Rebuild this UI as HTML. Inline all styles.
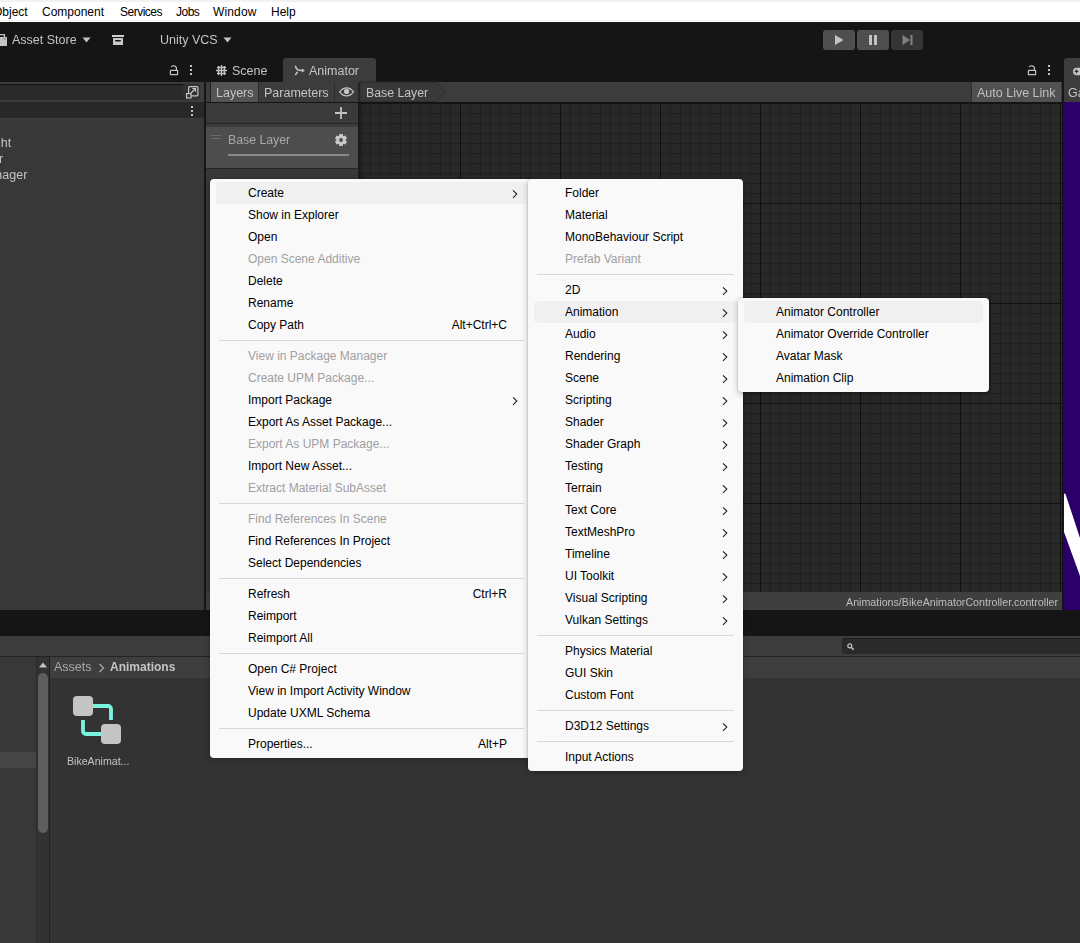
<!DOCTYPE html>
<html><head><meta charset="utf-8">
<style>
*{box-sizing:border-box;margin:0;padding:0}
html,body{width:1080px;height:943px;overflow:hidden;background:#151515}
body{position:relative;font-family:"Liberation Sans",sans-serif;}
.a{position:absolute}
.t{position:absolute;white-space:nowrap;color:#c4c4c4;font-size:12.5px;line-height:14px;will-change:transform}
.mb{position:absolute;top:5px;font-size:12px;line-height:14px;color:#000;white-space:nowrap}
.menu{position:absolute;background:#f9f9f9;border-radius:4px;box-shadow:0 0 0 1px rgba(0,0,0,0.07),0 2px 6px rgba(0,0,0,0.25)}
.mi{position:absolute;left:0;right:0;height:22px}
.mi span{position:absolute;top:4px;font-size:12px;line-height:14px;color:#000;white-space:nowrap}
.mi.d span{color:#a0a0a0}
.mi.h:before{content:"";position:absolute;left:6px;right:6px;top:0;bottom:0;background:#f0f0f0;border-radius:4px}
.sep{position:absolute;height:1px;background:#d8d8d8}
svg{position:absolute;overflow:visible}
</style></head><body>

<div class="a" style="left:0px;top:0px;width:1080px;height:2px;background:#f2f2f2;"></div>
<div class="a" style="left:0px;top:2px;width:1080px;height:20px;background:#ffffff;"></div>
<div class="a" style="left:0px;top:20px;width:1080px;height:1px;background:#f2f2f2;"></div>
<div class="mb" style="left:-7px;letter-spacing:0px">Object</div>
<div class="mb" style="left:42px;letter-spacing:0px">Component</div>
<div class="mb" style="left:120px;letter-spacing:-0.5px">Services</div>
<div class="mb" style="left:176px;letter-spacing:-0.5px">Jobs</div>
<div class="mb" style="left:213px;letter-spacing:0.15px">Window</div>
<div class="mb" style="left:271px;letter-spacing:0px">Help</div>
<div class="a" style="left:0px;top:22px;width:1080px;height:60px;background:#151515;"></div>
<svg style="left:0;top:33px" width="10" height="14"><path d="M-3 4h10v9h-10z" fill="#c4c4c4"/><path d="M-1 4V1.6h5.4V4" stroke="#c4c4c4" stroke-width="1.3" fill="none"/><path d="M3.3 5.3l1.2 1.1 1.2-1.1" stroke="#555" stroke-width="0.9" fill="none"/></svg>
<div class="t" style="left:12px;top:33px;font-size:12.5px;color:#c4c4c4;">Asset Store</div>
<svg style="left:82px;top:37px" width="10" height="6"><path d="M0.5 0.5h8l-4 5z" fill="#c4c4c4"/></svg>
<svg style="left:112px;top:34px" width="12" height="11"><rect x="0" y="1" width="12" height="2" fill="#d0d0d0"/><path d="M1 4h10v7h-10z" fill="#c8c8c8"/><path d="M3.2 6h5.6v0.4a1.2 1.2 0 0 1-1.2 1.2H4.4a1.2 1.2 0 0 1-1.2-1.2z" fill="#151515"/></svg>
<div class="t" style="left:160px;top:33px;font-size:12.5px;color:#c4c4c4;">Unity VCS</div>
<svg style="left:223px;top:37px" width="10" height="6"><path d="M0.5 0.5h8l-4 5z" fill="#c4c4c4"/></svg>
<div class="a" style="left:823px;top:30px;width:32px;height:20px;background:#4f4f4f;border-radius:3px"></div>
<div class="a" style="left:857px;top:30px;width:32px;height:20px;background:#4f4f4f;border-radius:3px"></div>
<div class="a" style="left:891px;top:30px;width:32px;height:20px;background:#353535;border-radius:3px"></div>
<svg style="left:834px;top:34px" width="10" height="12"><path d="M1 1v10l8.5-5z" fill="#c4c4c4"/></svg>
<div class="a" style="left:869px;top:35px;width:3px;height:10px;background:#c4c4c4;"></div>
<div class="a" style="left:874px;top:35px;width:3px;height:10px;background:#c4c4c4;"></div>
<svg style="left:902px;top:34px" width="12" height="12"><path d="M0.5 1v10l7.5-5z" fill="#808080"/><rect x="8.5" y="1" width="2" height="10" fill="#808080"/></svg>
<svg style="left:169px;top:65px" width="10" height="11"><path d="M2.2 1.9C3.6 0.3 6.9 0.3 7.4 2.6V5.2" stroke="#c4c4c4" stroke-width="1.2" fill="none"/><rect x="1.4" y="5.3" width="7.2" height="4.4" rx="0.5" stroke="#c4c4c4" stroke-width="1.2" fill="none"/></svg>
<div class="a" style="left:190px;top:65px;width:2px;height:2px;background:#c4c4c4;"></div>
<div class="a" style="left:190px;top:69px;width:2px;height:2px;background:#c4c4c4;"></div>
<div class="a" style="left:190px;top:73px;width:2px;height:2px;background:#c4c4c4;"></div>
<svg style="left:1027px;top:65px" width="10" height="11"><path d="M2.2 1.9C3.6 0.3 6.9 0.3 7.4 2.6V5.2" stroke="#c4c4c4" stroke-width="1.2" fill="none"/><rect x="1.4" y="5.3" width="7.2" height="4.4" rx="0.5" stroke="#c4c4c4" stroke-width="1.2" fill="none"/></svg>
<div class="a" style="left:1048px;top:65px;width:2px;height:2px;background:#c4c4c4;"></div>
<div class="a" style="left:1048px;top:69px;width:2px;height:2px;background:#c4c4c4;"></div>
<div class="a" style="left:1048px;top:73px;width:2px;height:2px;background:#c4c4c4;"></div>
<svg style="left:216px;top:65px" width="11" height="11"><path d="M2.6 1v9M5.5 0v11M8.4 1v9M1 2.5h9M0 5.5h11M1 8.5h9" stroke="#c4c4c4" stroke-width="1.3"/></svg>
<div class="t" style="left:232px;top:64px;font-size:12.5px;color:#c4c4c4;">Scene</div>
<div class="a" style="left:283px;top:58px;width:93px;height:24px;background:#3c3c3c;border-radius:3px 3px 0 0"></div>
<svg style="left:294px;top:65px" width="12" height="11"><path d="M1.6 1.4C2.2 4 3.6 5.4 6 5.4H8.5M3.4 7.3L1.6 9.4" stroke="#c4c4c4" stroke-width="1.6" fill="none" stroke-linecap="round"/><path d="M8 3.5L11 5.4 8 7.4z" fill="#c4c4c4"/></svg>
<div class="t" style="left:309px;top:64px;font-size:12.5px;color:#c4c4c4;">Animator</div>
<div class="a" style="left:1064px;top:58px;width:20px;height:24px;background:#3c3c3c;border-radius:3px 0 0 0"></div>
<svg style="left:1073px;top:67px" width="12" height="9"><rect x="0" y="0.8" width="14" height="7.4" rx="3.7" fill="#c4c4c4"/><path d="M3.5 2.6v3.6M1.7 4.4h3.6" stroke="#2a2a2a" stroke-width="1.2"/></svg>
<div class="a" style="left:0px;top:82px;width:204px;height:20px;background:#3c3c3c;"></div>
<div class="a" style="left:0px;top:84px;width:183px;height:16px;background:#2a2a2a;border-top:1px solid #111"></div>
<div class="a" style="left:183px;top:84px;width:17px;height:16px;background:#303030;border-radius:0 3px 3px 0"></div>
<svg style="left:186px;top:86px" width="13" height="13"><rect x="2.6" y="0.6" width="9.3" height="9.3" rx="1" stroke="#c4c4c4" stroke-width="1.2" fill="none"/><rect x="0.6" y="7.6" width="4.4" height="4.4" stroke="#c4c4c4" stroke-width="1.2" fill="#303030"/><path d="M5 7l4.5-4.5M6.3 2.5h3.2v3.2" stroke="#c4c4c4" stroke-width="1.2" fill="none"/></svg>
<div class="a" style="left:0px;top:102px;width:204px;height:16px;background:#282828;"></div>
<div class="a" style="left:191px;top:106px;width:2px;height:2px;background:#c4c4c4;"></div>
<div class="a" style="left:191px;top:110px;width:2px;height:2px;background:#c4c4c4;"></div>
<div class="a" style="left:191px;top:114px;width:2px;height:2px;background:#c4c4c4;"></div>
<div class="a" style="left:0px;top:118px;width:204px;height:492px;background:#383838;"></div>
<div class="a" style="left:0px;top:118px;width:204px;height:1px;background:#3f3f3f;"></div>
<div class="t" style="left:-16px;top:136px;font-size:12.5px;color:#c4c4c4;">Light</div>
<div class="t" style="left:-15px;top:152px;font-size:12.5px;color:#c4c4c4;">ner</div>
<div class="t" style="left:-22px;top:168px;font-size:12.5px;color:#c4c4c4;">Manager</div>
<div class="a" style="left:204px;top:82px;width:2px;height:528px;background:#151515;"></div>
<div class="a" style="left:206px;top:82px;width:856px;height:20px;background:#3c3c3c;"></div>
<div class="a" style="left:210px;top:82px;width:1px;height:20px;background:#232323;"></div>
<div class="a" style="left:211px;top:82px;width:47px;height:20px;background:#545454;"></div>
<div class="t" style="left:216px;top:86px;font-size:12.5px;color:#c4c4c4;">Layers</div>
<div class="a" style="left:258px;top:82px;width:1px;height:20px;background:#2a2a2a;"></div>
<div class="t" style="left:264px;top:86px;font-size:12.5px;color:#c4c4c4;">Parameters</div>
<div class="a" style="left:334px;top:82px;width:1px;height:20px;background:#2a2a2a;"></div>
<svg style="left:339px;top:87px" width="16" height="10"><path d="M0.8 4.8C3 1.6 5.5 0.8 7.6 0.8s4.6 0.8 6.8 4c-2.2 3.2-4.7 4-6.8 4S3 8 0.8 4.8z" stroke="#c4c4c4" stroke-width="1.3" fill="none"/><circle cx="7.6" cy="4.4" r="2.6" fill="#c4c4c4"/></svg>
<div class="a" style="left:358px;top:82px;width:2px;height:20px;background:#232323;"></div>
<svg style="left:360px;top:82px" width="90" height="20"><path d="M0 0h76l9 10-9 10H0z" fill="#393939" stroke="#2b2b2b" stroke-width="1"/></svg>
<div class="t" style="left:366px;top:86px;font-size:12.3px;color:#c4c4c4;">Base Layer</div>
<div class="a" style="left:971px;top:82px;width:1px;height:20px;background:#2e2e2e;"></div>
<div class="a" style="left:972px;top:82px;width:89px;height:20px;background:#515151;"></div>
<div class="t" style="left:977px;top:86px;font-size:12.5px;color:#c0c0c0;">Auto Live Link</div>
<div class="a" style="left:206px;top:102px;width:856px;height:1px;background:#151515;"></div>
<div class="a" style="left:206px;top:103px;width:152px;height:489px;background:#383838;"></div>
<div class="a" style="left:206px;top:103px;width:152px;height:20px;background:#3a3a3a;"></div>
<svg style="left:335px;top:107px" width="12" height="12"><path d="M6 0v12M0 6h12" stroke="#c4c4c4" stroke-width="1.8"/></svg>
<div class="a" style="left:206px;top:123px;width:152px;height:1px;background:#262626;"></div>
<div class="a" style="left:206px;top:124px;width:152px;height:3px;background:#3d3d3d;"></div>
<div class="a" style="left:206px;top:127px;width:152px;height:41px;background:#4d4d4d;"></div>
<div class="a" style="left:211px;top:135px;width:10px;height:1px;background:#6a6a6a;"></div>
<div class="a" style="left:211px;top:138px;width:10px;height:1px;background:#6a6a6a;"></div>
<div class="t" style="left:228px;top:133px;font-size:12.3px;color:#a8a8a8;">Base Layer</div>
<svg style="left:334px;top:133px" width="14" height="14"><g transform="translate(7 7)" fill="#c8c8c8"><circle r="4.7"/><g><rect x="-1.9" y="-6" width="3.8" height="3" rx="0.6"/><rect x="-1.9" y="3" width="3.8" height="3" rx="0.6"/></g><g transform="rotate(60)"><rect x="-1.9" y="-6" width="3.8" height="3" rx="0.6"/><rect x="-1.9" y="3" width="3.8" height="3" rx="0.6"/></g><g transform="rotate(120)"><rect x="-1.9" y="-6" width="3.8" height="3" rx="0.6"/><rect x="-1.9" y="3" width="3.8" height="3" rx="0.6"/></g></g><circle cx="7" cy="7" r="1.9" fill="#4d4d4d"/></svg>
<div class="a" style="left:228px;top:154px;width:121px;height:2px;background:#8a8a8a;"></div>
<div class="a" style="left:206px;top:168px;width:152px;height:1px;background:#262626;"></div>
<div class="a" style="left:361px;top:103px;width:701px;height:489px;background-color:#282828;
background-image:
linear-gradient(to right,#111 1px,transparent 1px),
linear-gradient(to bottom,#111 1px,transparent 1px),
linear-gradient(to right,#1f1f1f 1px,transparent 1px),
linear-gradient(to bottom,#1f1f1f 1px,transparent 1px);
background-size:100px 100px,100px 100px,10px 10px,10px 10px;
background-position:99px 0,0 0,9px 0,0 0"></div>
<div class="a" style="left:358px;top:103px;width:3px;height:489px;background:#222222;"></div>
<div class="a" style="left:358px;top:102px;width:704px;height:2px;background:#141414;"></div>
<div class="a" style="left:358px;top:103px;width:9px;height:489px;background:linear-gradient(to right,rgba(0,0,0,0.25),rgba(0,0,0,0.1) 50%,rgba(0,0,0,0))"></div>
<div class="a" style="left:206px;top:592px;width:856px;height:18px;background:#3f3f3f;"></div>
<div class="t" style="right:22px;top:595px;font-size:10.7px;color:#bdbdbd">Animations/BikeAnimatorController.controller</div>
<div class="a" style="left:1062px;top:58px;width:2px;height:552px;background:#151515;"></div>
<div class="a" style="left:1064px;top:82px;width:16px;height:20px;background:#3c3c3c;"></div>
<div class="t" style="left:1068px;top:86px;font-size:12.5px;color:#c4c4c4;">Game</div>
<div class="a" style="left:1064px;top:102px;width:16px;height:508px;background:#2a0068;"></div>
<svg style="left:1064px;top:490px" width="16" height="90"><path d="M0 4Q0 3 1.5 4L16 48V86L0 42z" fill="#ffffff"/></svg>
<div class="a" style="left:0px;top:610px;width:1080px;height:26px;background:#151515;"></div>
<div class="a" style="left:0px;top:636px;width:1080px;height:20px;background:#3c3c3c;"></div>
<div class="a" style="left:842px;top:638px;width:240px;height:16px;background:#2a2a2a;border-radius:3px;border-top:1px solid #202020"></div>
<svg style="left:847px;top:643px" width="8" height="8"><circle cx="2.8" cy="2.8" r="2" stroke="#c4c4c4" stroke-width="1.2" fill="none"/><path d="M4.2 4.2l2.5 2.5" stroke="#c4c4c4" stroke-width="1.6"/></svg>
<div class="a" style="left:0px;top:656px;width:1080px;height:1px;background:#232323;"></div>
<div class="a" style="left:0px;top:657px;width:36px;height:286px;background:#383838;"></div>
<div class="a" style="left:0px;top:752px;width:36px;height:16px;background:#464646;"></div>
<div class="a" style="left:36px;top:657px;width:13px;height:286px;background:#323232;"></div>
<div class="a" style="left:36px;top:657px;width:1px;height:286px;background:#2c2c2c;"></div>
<svg style="left:38px;top:662px" width="10" height="6"><path d="M1 5.5L5 0.5 9 5.5z" fill="#c4c4c4"/></svg>
<div class="a" style="left:38px;top:673px;width:10px;height:160px;background:#5e5e5e;border-radius:5px"></div>
<div class="a" style="left:49px;top:657px;width:1px;height:286px;background:#232323;"></div>
<div class="a" style="left:50px;top:657px;width:1030px;height:21px;background:#3e3e3e;"></div>
<div class="t" style="left:54px;top:660px;font-size:12.5px;color:#a8a8a8;">Assets</div>
<svg style="left:98px;top:663px" width="8" height="10"><path d="M1.5 1l4 4-4 4" stroke="#a8a8a8" stroke-width="1.3" fill="none"/></svg>
<div class="t" style="left:110px;top:660px;font-size:12px;color:#c4c4c4;font-weight:bold">Animations</div>
<div class="a" style="left:50px;top:678px;width:1030px;height:265px;background:#333333;"></div>
<svg style="left:72px;top:695px" width="52" height="52"><path d="M20 11h16a3 3 0 0 1 3 3V25M11 25v11a3 3 0 0 0 3 3h16" stroke="#7af4e0" stroke-width="3.8" fill="none"/><rect x="1" y="1" width="20" height="20" rx="4" fill="#c4c4c4"/><rect x="29" y="29" width="20" height="20" rx="4" fill="#c4c4c4"/></svg>
<div class="t" style="left:67px;top:754px;font-size:10.6px;color:#c4c4c4;">BikeAnimat...</div>
<div class="menu" style="left:210px;top:179px;width:323px;height:579px">
<div class="mi h" style="top:3px"><span style="left:38px">Create</span>
<svg style="left:301.5px;top:7px" width="7" height="10"><path d="M1 1.3l3.8 3.8L1 8.9" stroke="#1e1e1e" stroke-width="1.1" fill="none"/></svg>
</div>
<div class="mi" style="top:25px"><span style="left:38px">Show in Explorer</span>
</div>
<div class="mi" style="top:47px"><span style="left:38px">Open</span>
</div>
<div class="mi d" style="top:69px"><span style="left:38px">Open Scene Additive</span>
</div>
<div class="mi" style="top:91px"><span style="left:38px">Delete</span>
</div>
<div class="mi" style="top:113px"><span style="left:38px">Rename</span>
</div>
<div class="mi" style="top:135px"><span style="left:38px">Copy Path</span>
<span style="right:26px">Alt+Ctrl+C</span>
</div>
<div class="sep" style="left:9px;right:9px;top:161px"></div>
<div class="mi d" style="top:166px"><span style="left:38px">View in Package Manager</span>
</div>
<div class="mi d" style="top:188px"><span style="left:38px">Create UPM Package...</span>
</div>
<div class="mi" style="top:210px"><span style="left:38px">Import Package</span>
<svg style="left:301.5px;top:7px" width="7" height="10"><path d="M1 1.3l3.8 3.8L1 8.9" stroke="#1e1e1e" stroke-width="1.1" fill="none"/></svg>
</div>
<div class="mi" style="top:232px"><span style="left:38px">Export As Asset Package...</span>
</div>
<div class="mi d" style="top:254px"><span style="left:38px">Export As UPM Package...</span>
</div>
<div class="mi" style="top:276px"><span style="left:38px">Import New Asset...</span>
</div>
<div class="mi d" style="top:298px"><span style="left:38px">Extract Material SubAsset</span>
</div>
<div class="sep" style="left:9px;right:9px;top:324px"></div>
<div class="mi d" style="top:329px"><span style="left:38px">Find References In Scene</span>
</div>
<div class="mi" style="top:351px"><span style="left:38px">Find References In Project</span>
</div>
<div class="mi" style="top:373px"><span style="left:38px">Select Dependencies</span>
</div>
<div class="sep" style="left:9px;right:9px;top:399px"></div>
<div class="mi" style="top:404px"><span style="left:38px">Refresh</span>
<span style="right:26px">Ctrl+R</span>
</div>
<div class="mi" style="top:426px"><span style="left:38px">Reimport</span>
</div>
<div class="mi" style="top:448px"><span style="left:38px">Reimport All</span>
</div>
<div class="sep" style="left:9px;right:9px;top:474px"></div>
<div class="mi" style="top:479px"><span style="left:38px">Open C# Project</span>
</div>
<div class="mi" style="top:501px"><span style="left:38px">View in Import Activity Window</span>
</div>
<div class="mi" style="top:523px"><span style="left:38px">Update UXML Schema</span>
</div>
<div class="sep" style="left:9px;right:9px;top:549px"></div>
<div class="mi" style="top:554px"><span style="left:38px">Properties...</span>
<span style="right:26px">Alt+P</span>
</div>
</div>
<div class="menu" style="left:528px;top:179px;width:215px;height:592px">
<div class="mi" style="top:3px"><span style="left:37px">Folder</span>
</div>
<div class="mi" style="top:25px"><span style="left:37px">Material</span>
</div>
<div class="mi" style="top:47px"><span style="left:37px">MonoBehaviour Script</span>
</div>
<div class="mi d" style="top:69px"><span style="left:37px">Prefab Variant</span>
</div>
<div class="sep" style="left:9px;right:9px;top:95px"></div>
<div class="mi" style="top:100px"><span style="left:37px">2D</span>
<svg style="left:193.5px;top:7px" width="7" height="10"><path d="M1 1.3l3.8 3.8L1 8.9" stroke="#1e1e1e" stroke-width="1.1" fill="none"/></svg>
</div>
<div class="mi h" style="top:122px"><span style="left:37px">Animation</span>
<svg style="left:193.5px;top:7px" width="7" height="10"><path d="M1 1.3l3.8 3.8L1 8.9" stroke="#1e1e1e" stroke-width="1.1" fill="none"/></svg>
</div>
<div class="mi" style="top:144px"><span style="left:37px">Audio</span>
<svg style="left:193.5px;top:7px" width="7" height="10"><path d="M1 1.3l3.8 3.8L1 8.9" stroke="#1e1e1e" stroke-width="1.1" fill="none"/></svg>
</div>
<div class="mi" style="top:166px"><span style="left:37px">Rendering</span>
<svg style="left:193.5px;top:7px" width="7" height="10"><path d="M1 1.3l3.8 3.8L1 8.9" stroke="#1e1e1e" stroke-width="1.1" fill="none"/></svg>
</div>
<div class="mi" style="top:188px"><span style="left:37px">Scene</span>
<svg style="left:193.5px;top:7px" width="7" height="10"><path d="M1 1.3l3.8 3.8L1 8.9" stroke="#1e1e1e" stroke-width="1.1" fill="none"/></svg>
</div>
<div class="mi" style="top:210px"><span style="left:37px">Scripting</span>
<svg style="left:193.5px;top:7px" width="7" height="10"><path d="M1 1.3l3.8 3.8L1 8.9" stroke="#1e1e1e" stroke-width="1.1" fill="none"/></svg>
</div>
<div class="mi" style="top:232px"><span style="left:37px">Shader</span>
<svg style="left:193.5px;top:7px" width="7" height="10"><path d="M1 1.3l3.8 3.8L1 8.9" stroke="#1e1e1e" stroke-width="1.1" fill="none"/></svg>
</div>
<div class="mi" style="top:254px"><span style="left:37px">Shader Graph</span>
<svg style="left:193.5px;top:7px" width="7" height="10"><path d="M1 1.3l3.8 3.8L1 8.9" stroke="#1e1e1e" stroke-width="1.1" fill="none"/></svg>
</div>
<div class="mi" style="top:276px"><span style="left:37px">Testing</span>
<svg style="left:193.5px;top:7px" width="7" height="10"><path d="M1 1.3l3.8 3.8L1 8.9" stroke="#1e1e1e" stroke-width="1.1" fill="none"/></svg>
</div>
<div class="mi" style="top:298px"><span style="left:37px">Terrain</span>
<svg style="left:193.5px;top:7px" width="7" height="10"><path d="M1 1.3l3.8 3.8L1 8.9" stroke="#1e1e1e" stroke-width="1.1" fill="none"/></svg>
</div>
<div class="mi" style="top:320px"><span style="left:37px">Text Core</span>
<svg style="left:193.5px;top:7px" width="7" height="10"><path d="M1 1.3l3.8 3.8L1 8.9" stroke="#1e1e1e" stroke-width="1.1" fill="none"/></svg>
</div>
<div class="mi" style="top:342px"><span style="left:37px">TextMeshPro</span>
<svg style="left:193.5px;top:7px" width="7" height="10"><path d="M1 1.3l3.8 3.8L1 8.9" stroke="#1e1e1e" stroke-width="1.1" fill="none"/></svg>
</div>
<div class="mi" style="top:364px"><span style="left:37px">Timeline</span>
<svg style="left:193.5px;top:7px" width="7" height="10"><path d="M1 1.3l3.8 3.8L1 8.9" stroke="#1e1e1e" stroke-width="1.1" fill="none"/></svg>
</div>
<div class="mi" style="top:386px"><span style="left:37px">UI Toolkit</span>
<svg style="left:193.5px;top:7px" width="7" height="10"><path d="M1 1.3l3.8 3.8L1 8.9" stroke="#1e1e1e" stroke-width="1.1" fill="none"/></svg>
</div>
<div class="mi" style="top:408px"><span style="left:37px">Visual Scripting</span>
<svg style="left:193.5px;top:7px" width="7" height="10"><path d="M1 1.3l3.8 3.8L1 8.9" stroke="#1e1e1e" stroke-width="1.1" fill="none"/></svg>
</div>
<div class="mi" style="top:430px"><span style="left:37px">Vulkan Settings</span>
<svg style="left:193.5px;top:7px" width="7" height="10"><path d="M1 1.3l3.8 3.8L1 8.9" stroke="#1e1e1e" stroke-width="1.1" fill="none"/></svg>
</div>
<div class="sep" style="left:9px;right:9px;top:456px"></div>
<div class="mi" style="top:461px"><span style="left:37px">Physics Material</span>
</div>
<div class="mi" style="top:483px"><span style="left:37px">GUI Skin</span>
</div>
<div class="mi" style="top:505px"><span style="left:37px">Custom Font</span>
</div>
<div class="sep" style="left:9px;right:9px;top:531px"></div>
<div class="mi" style="top:536px"><span style="left:37px">D3D12 Settings</span>
<svg style="left:193.5px;top:7px" width="7" height="10"><path d="M1 1.3l3.8 3.8L1 8.9" stroke="#1e1e1e" stroke-width="1.1" fill="none"/></svg>
</div>
<div class="sep" style="left:9px;right:9px;top:562px"></div>
<div class="mi" style="top:567px"><span style="left:37px">Input Actions</span>
</div>
</div>
<div class="menu" style="left:738px;top:298px;width:251px;height:94px">
<div class="mi h" style="top:3px"><span style="left:38px">Animator Controller</span>
</div>
<div class="mi" style="top:25px"><span style="left:38px">Animator Override Controller</span>
</div>
<div class="mi" style="top:47px"><span style="left:38px">Avatar Mask</span>
</div>
<div class="mi" style="top:69px"><span style="left:38px">Animation Clip</span>
</div>
</div>
</body></html>
